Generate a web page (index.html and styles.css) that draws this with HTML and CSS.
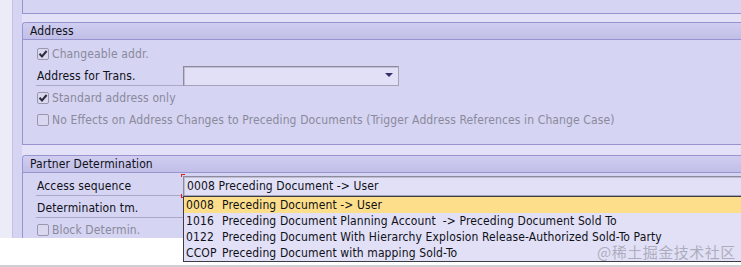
FILE: index.html
```html
<!DOCTYPE html>
<html lang="en">
<head>
    <meta charset="UTF-8">
    <title>Sales Document Type - Partner</title>
    <link rel="stylesheet" href="styles.css">
</head>
<body>
    <div class="screen">
        <div class="strip"></div>
        <div class="main">
            <div class="group group-top"></div>
            <div class="gap"></div>

            <div class="group">
                <div class="group-head">Address</div>
                <div class="group-body">
                    <div class="row">
                        <span class="check"><svg width="10" height="10" viewBox="0 0 10 10"><path d="M1.5 4.8 L4 7.5 L8.6 2" fill="none" stroke="#2c2c3a" stroke-width="2"/></svg></span>
                        <span class="dim">Changeable addr.</span>
                    </div>
                    <div class="row">
                        <span class="label">Address for Trans.</span>
                        <span class="combo"><span class="arrow"></span></span>
                    </div>
                    <div class="row">
                        <span class="check"><svg width="10" height="10" viewBox="0 0 10 10"><path d="M1.5 4.8 L4 7.5 L8.6 2" fill="none" stroke="#2c2c3a" stroke-width="2"/></svg></span>
                        <span class="dim">Standard address only</span>
                    </div>
                    <div class="row">
                        <span class="check"></span>
                        <span class="dim">No Effects on Address Changes to Preceding Documents (Trigger Address References in Change Case)</span>
                    </div>
                </div>
            </div>

            <div class="gap gap-wide"></div>

            <div class="group group-fill">
                <div class="group-head">Partner Determination</div>
                <div class="group-body group-body-tight">
                    <div class="row">
                        <span class="label">Access sequence</span>
                        <div class="field">
                            0008 Preceding Document -&gt; User
                            <span class="focus focus-top"></span>
                            <span class="focus focus-bottom"></span>
                            <ul class="list">
                                <li class="selected"><span class="code">0008</span>Preceding Document -&gt; User</li>
                                <li><span class="code">1016</span>Preceding Document Planning Account  -&gt; Preceding Document Sold To</li>
                                <li><span class="code">0122</span>Preceding Document With Hierarchy Explosion Release-Authorized Sold-To Party</li>
                                <li><span class="code">CCOP</span>Preceding Document with mapping Sold-To</li>
                            </ul>
                        </div>
                    </div>
                    <div class="row">
                        <span class="label">Determination tm.</span>
                    </div>
                    <div class="row">
                        <span class="check"></span>
                        <span class="dim">Block Determin.</span>
                    </div>
                </div>
            </div>
        </div>
    </div>
    <div class="footer"></div>
    <div class="watermark">@稀土掘金技术社区</div>
</body>
</html>
```

FILE: styles.css
```css
body {
    margin: 0;
    background-color: #ffffff;
    font-family: "DejaVu Sans Condensed", "DejaVu Sans", sans-serif;
    font-size: 12px;
    letter-spacing: 0.12px;
    color: #101018;
    overflow: hidden;
}

.screen {
    display: flex;
    height: 238px;
}

.strip {
    width: 12px;
    background-color: #ecebf8;
    border-right: 1px solid #c3c1e4;
}

.main {
    flex: 1;
    display: flex;
    flex-direction: column;
    background-color: #d5d4f2;
    padding-left: 9px;
}

.group {
    border-left: 1px solid #9794cf;
    border-top: 1px solid #9794cf;
    border-bottom: 1px solid #9794cf;
    border-top-left-radius: 4px;
}

.group-top {
    height: 13px;
    border-top: none;
    border-radius: 0;
}

.group-fill {
    flex: 1;
    min-height: 0;
    border-bottom: none;
}

.gap {
    height: 8px;
    background-color: #e2e1f7;
}

.gap-wide {
    height: 10px;
}

.group-head {
    height: 16px;
    line-height: 17px;
    padding-left: 7px;
    background: linear-gradient(#cfcdf0, #c1bfe7);
    border-bottom: 1px solid #9794cf;
    border-top-left-radius: 3px;
}

.group-body {
    padding: 3px 0 13px 13px;
}

.group-body-tight {
    padding-top: 2px;
    padding-bottom: 0;
}

.row {
    display: flex;
    align-items: center;
    height: 22px;
    line-height: 23px;
}

.label {
    align-self: flex-start;
    width: 146px;
    height: 20px;
    line-height: 22px;
    padding-left: 1px;
    border-bottom: 1px solid #aaa8c8;
}

.dim {
    color: #8a8a9c;
}

.check {
    width: 10px;
    height: 10px;
    margin-left: 1px;
    margin-right: 3px;
    border: 1px solid #9897ad;
    border-radius: 2px;
    background-color: #d9d8f0;
    display: flex;
    align-items: center;
    justify-content: center;
}

.combo {
    align-self: flex-start;
    margin-top: 1px;
    width: 214px;
    height: 18px;
    background-color: #e1e0f6;
    border: 1px solid #a3a2b6;
    border-top-color: #8c8b9e;
    border-left-color: #8c8b9e;
    box-shadow: inset 1px 1px 0 #bebdd2;
    display: flex;
    align-items: center;
    justify-content: flex-end;
}

.arrow {
    width: 0;
    height: 0;
    margin-right: 5px;
    margin-bottom: 3px;
    border-left: 4px solid transparent;
    border-right: 4px solid transparent;
    border-top: 4px solid #3a2d6c;
}

.field {
    position: relative;
    align-self: flex-start;
    flex: 1;
    margin-top: 1px;
    height: 18px;
    line-height: 19px;
    padding-left: 3px;
    background-color: #e1e0f6;
    border-top: 1px solid #8c8b9e;
    border-left: 1px solid #8c8b9e;
    border-bottom: 1px solid #a3a2b6;
    box-shadow: inset 1px 1px 0 #bebdd2;
    white-space: nowrap;
}

.focus {
    position: absolute;
    left: -3px;
    width: 3px;
    border-left: 1px solid #e0201c;
}

.focus-top {
    top: -3px;
    height: 2px;
    border-top: 1px solid #e0201c;
}

.focus-bottom {
    top: 17px;
    height: 3px;
    border-bottom: 1px solid #e0201c;
}

.list {
    position: absolute;
    top: 19px;
    left: -1px;
    right: 0;
    margin: 0;
    padding: 0;
    list-style: none;
    background-color: #e1e0f6;
    border: 1px solid #3c3c44;
    border-right: none;
    z-index: 2;
}

.list li {
    height: 16px;
    line-height: 17px;
    padding-left: 2px;
    white-space: pre;
    color: #101018;
}

.list li.selected {
    background-color: #fddf8b;
}

.code {
    display: inline-block;
    width: 36px;
}

.footer {
    height: 27px;
    border-bottom: 2px solid #cfcfd6;
}

.watermark {
    position: absolute;
    left: 597px;
    top: 242px;
    font-family: "Noto Sans CJK SC", sans-serif;
    font-size: 15px;
    line-height: 20px;
    letter-spacing: 0.5px;
    white-space: nowrap;
    color: rgba(120, 120, 130, 0.5);
    z-index: 5;
}
```
